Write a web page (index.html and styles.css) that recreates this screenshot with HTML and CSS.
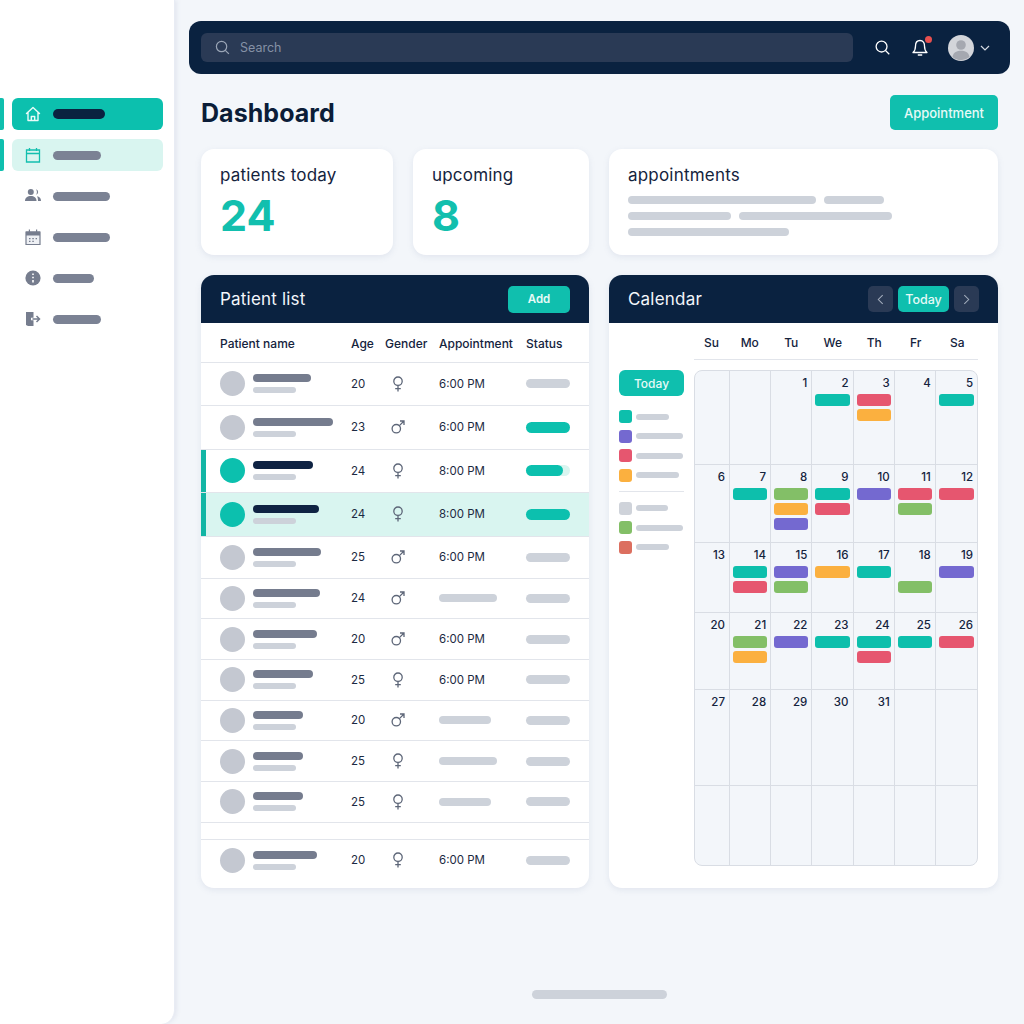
FILE: index.html
```html
<!DOCTYPE html>
<html lang="en">
<head>
    <meta charset="UTF-8">
    <meta name="viewport" content="width=device-width, initial-scale=1.0">
    <title>Dashboard</title>
    <link rel="stylesheet" href="styles.css">
</head>
<body>
    <svg class="defs" width="0" height="0">
        <symbol id="female" viewBox="0 0 14 16">
            <circle cx="7" cy="5.2" r="4.2" fill="none" stroke="currentColor" stroke-width="1.3"/>
            <path d="M7 9.4V15.4M4.2 12.6H9.8" fill="none" stroke="currentColor" stroke-width="1.3"/>
        </symbol>
        <symbol id="male" viewBox="0 0 14 14">
            <circle cx="5.3" cy="8.7" r="4.2" fill="none" stroke="currentColor" stroke-width="1.3"/>
            <path d="M8.4 5.6L13 1M9 1H13V5" fill="none" stroke="currentColor" stroke-width="1.3"/>
        </symbol>
    </svg>

    <aside class="sidebar">
        <nav class="nav">
            <div class="nav-row">
                <span class="marker"></span>
                <div class="nav-item active">
                    <svg class="nav-icon" viewBox="0 0 16 16"><path d="M1.5 7.5L8 1.5L14.5 7.5M3 6.5V14.5H13V6.5M6.3 14.5V10.5H9.7V14.5" fill="none" stroke="#e8fbf8" stroke-width="1.4" stroke-linejoin="round" stroke-linecap="round"/></svg>
                    <span class="nav-bar dark w52"></span>
                </div>
            </div>
            <div class="nav-row">
                <span class="marker"></span>
                <div class="nav-item soft">
                    <svg class="nav-icon" viewBox="0 0 16 16"><path d="M1.5 3H14.5V15H1.5ZM1.5 6.5H14.5M4.5 1V4M11.5 1V4" fill="none" stroke="#13bfae" stroke-width="1.3"/></svg>
                    <span class="nav-bar w48"></span>
                </div>
            </div>
            <div class="nav-row">
                <span class="marker off"></span>
                <div class="nav-item">
                    <svg class="nav-icon" viewBox="0 0 16 16"><circle cx="5.8" cy="4" r="3" fill="#767d8e"/><path d="M11 1.2a2.9 2.9 0 0 1 0 5.6a5 5 0 0 0 0-5.6Z" fill="#767d8e"/><path d="M0 13C0 9.5 2.5 8 5.8 8S11.5 9.5 11.5 13Z" fill="#767d8e"/><path d="M12 8.2C14.500 8.500 16 10 16 13H13C13 11 12.800 9.500 12 8.200Z" fill="#767d8e"/></svg>
                    <span class="nav-bar w57"></span>
                </div>
            </div>
            <div class="nav-row">
                <span class="marker off"></span>
                <div class="nav-item">
                    <svg class="nav-icon" viewBox="0 0 16 16"><path d="M1 3H15V15.500H1Z" fill="#eef0f4" stroke="#767d8e" stroke-width="1.200"/><path d="M1 2.500H15V6.500H1ZM3.800 0.500H5V3H3.800ZM11 0.500H12.200V3H11Z" fill="#767d8e"/><path d="M4 9H5.500V10.300H4ZM7.300 9H8.800V10.300H7.300ZM10.600 9H12V10.300H10.600ZM4 11.800H5.500V13H4ZM7.300 11.800H8.800V13H7.300Z" fill="#767d8e"/></svg>
                    <span class="nav-bar w57"></span>
                </div>
            </div>
            <div class="nav-row">
                <span class="marker off"></span>
                <div class="nav-item">
                    <svg class="nav-icon" viewBox="0 0 16 16"><circle cx="8" cy="8" r="7.600" fill="#767d8e"/><path d="M7.200 3.500H8.800V5.100H7.200ZM7.200 6.700H8.800V8.300H7.200ZM7.200 9.900H8.800V12.500H7.200Z" fill="#fff"/></svg>
                    <span class="nav-bar w41"></span>
                </div>
            </div>
            <div class="nav-row">
                <span class="marker off"></span>
                <div class="nav-item">
                    <svg class="nav-icon" viewBox="0 0 16 16"><path d="M1 1H8.500V6.800H6V9.200H8.500V15H3L1 14Z" fill="#767d8e"/><path d="M7.500 8H14.500M11.500 5L14.500 8L11.500 11" fill="none" stroke="#767d8e" stroke-width="1.500"/></svg>
                    <span class="nav-bar w48"></span>
                </div>
            </div>
        </nav>
    </aside>

    <main class="main">
        <header class="topbar">
            <div class="search">
                <svg class="search-icon" viewBox="0 0 16 16"><circle cx="7" cy="7" r="5.500" fill="none" stroke="#9aa5b6" stroke-width="1.300"/><path d="M11 11L14.800 14.800" stroke="#9aa5b6" stroke-width="1.300"/></svg>
                <span>Search</span>
            </div>
            <div class="top-actions">
                <svg class="top-icon" viewBox="0 0 16 16"><circle cx="7" cy="7" r="5.800" fill="none" stroke="#fff" stroke-width="1.400"/><path d="M11.200 11.200L15.200 15.200" stroke="#fff" stroke-width="1.400"/></svg>
                <div class="bell">
                    <svg class="top-icon" viewBox="0 0 16 18"><path d="M8 1.500C4.800 1.500 3.500 4 3.500 7C3.500 10 2.800 12 1 13.500H15C13.200 12 12.500 10 12.500 7C12.500 4 11.200 1.500 8 1.500Z" fill="none" stroke="#fff" stroke-width="1.300" stroke-linejoin="round"/><path d="M5.800 16H10.200" stroke="#fff" stroke-width="1.500"/></svg>
                    <span class="bell-dot"></span>
                </div>
                <div class="user">
                    <svg class="user-pic" viewBox="0 0 26 26"><circle cx="13" cy="13" r="13" fill="#d3d5da"/><circle cx="13" cy="10" r="4.800" fill="#a5a8b0"/><path d="M4.500 22C5.500 17 9 15.800 13 15.800S20.500 17 21.500 22A13 13 0 0 1 4.500 22Z" fill="#a5a8b0"/></svg>
                    <svg class="chevron" viewBox="0 0 10 6"><path d="M1 1L5 5L9 1" fill="none" stroke="#d5dae3" stroke-width="1.200"/></svg>
                </div>
            </div>
        </header>

        <div class="content">
            <div class="title-row">
                <h1>Dashboard</h1>
                <button class="btn-appointment">Appointment</button>
            </div>

            <section class="stats">
                <div class="card">
                    <div class="card-label">patients today</div>
                    <div class="card-number">24</div>
                </div>
                <div class="card">
                    <div class="card-label">upcoming</div>
                    <div class="card-number">8</div>
                </div>
                <div class="card">
                    <div class="card-label">appointments</div>
                    <div class="lines">
                        <div class="line-row"><span class="sk" style="width:188px"></span><span class="sk" style="width:60px"></span></div>
                        <div class="line-row"><span class="sk" style="width:103px"></span><span class="sk" style="width:153px"></span></div>
                        <div class="line-row"><span class="sk" style="width:161px"></span></div>
                    </div>
                </div>
            </section>

            <section class="panels">
                <div class="panel">
                    <div class="panel-head">
                        <h2>Patient list</h2>
                        <button class="btn-add">Add</button>
                    </div>
                    <div class="table">
                        <div class="row head-row">
                            <span class="col-name">Patient name</span>
                            <span>Age</span>
                            <span>Gender</span>
                            <span>Appointment</span>
                            <span>Status</span>
                        </div>
                        <div class="row tall">
                            <div class="patient"><span class="avatar"></span><div><span class="name" style="width:58px"></span><span class="sub"></span></div></div>
                            <span>20</span>
                            <svg class="gender female"><use href="#female"/></svg>
                            <span>6:00 PM</span>
                            <span class="status"></span>
                        </div>
                        <div class="row tall">
                            <div class="patient"><span class="avatar"></span><div><span class="name" style="width:80px"></span><span class="sub"></span></div></div>
                            <span>23</span>
                            <svg class="gender male"><use href="#male"/></svg>
                            <span>6:00 PM</span>
                            <span class="status on"></span>
                        </div>
                        <div class="row tall picked">
                            <div class="patient"><span class="avatar teal"></span><div><span class="name dark" style="width:60px"></span><span class="sub"></span></div></div>
                            <span>24</span>
                            <svg class="gender female"><use href="#female"/></svg>
                            <span>8:00 PM</span>
                            <span class="status part"><span class="status-fill"></span></span>
                        </div>
                        <div class="row tall picked tinted">
                            <div class="patient"><span class="avatar teal"></span><div><span class="name dark" style="width:66px"></span><span class="sub"></span></div></div>
                            <span>24</span>
                            <svg class="gender female"><use href="#female"/></svg>
                            <span>8:00 PM</span>
                            <span class="status on"></span>
                        </div>
                        <div class="row mid">
                            <div class="patient"><span class="avatar"></span><div><span class="name" style="width:68px"></span><span class="sub"></span></div></div>
                            <span>25</span>
                            <svg class="gender male"><use href="#male"/></svg>
                            <span>6:00 PM</span>
                            <span class="status"></span>
                        </div>
                        <div class="row">
                            <div class="patient"><span class="avatar"></span><div><span class="name" style="width:67px"></span><span class="sub"></span></div></div>
                            <span>24</span>
                            <svg class="gender male"><use href="#male"/></svg>
                            <span class="sk" style="width:58px"></span>
                            <span class="status"></span>
                        </div>
                        <div class="row">
                            <div class="patient"><span class="avatar"></span><div><span class="name" style="width:64px"></span><span class="sub"></span></div></div>
                            <span>20</span>
                            <svg class="gender male"><use href="#male"/></svg>
                            <span>6:00 PM</span>
                            <span class="status"></span>
                        </div>
                        <div class="row">
                            <div class="patient"><span class="avatar"></span><div><span class="name" style="width:60px"></span><span class="sub"></span></div></div>
                            <span>25</span>
                            <svg class="gender female"><use href="#female"/></svg>
                            <span>6:00 PM</span>
                            <span class="status"></span>
                        </div>
                        <div class="row">
                            <div class="patient"><span class="avatar"></span><div><span class="name" style="width:50px"></span><span class="sub"></span></div></div>
                            <span>20</span>
                            <svg class="gender male"><use href="#male"/></svg>
                            <span class="sk" style="width:52px"></span>
                            <span class="status"></span>
                        </div>
                        <div class="row">
                            <div class="patient"><span class="avatar"></span><div><span class="name" style="width:50px"></span><span class="sub"></span></div></div>
                            <span>25</span>
                            <svg class="gender female"><use href="#female"/></svg>
                            <span class="sk" style="width:58px"></span>
                            <span class="status"></span>
                        </div>
                        <div class="row">
                            <div class="patient"><span class="avatar"></span><div><span class="name" style="width:50px"></span><span class="sub"></span></div></div>
                            <span>25</span>
                            <svg class="gender female"><use href="#female"/></svg>
                            <span class="sk" style="width:52px"></span>
                            <span class="status"></span>
                        </div>
                        <div class="row-gap"></div>
                        <div class="row last">
                            <div class="patient"><span class="avatar"></span><div><span class="name" style="width:64px"></span><span class="sub"></span></div></div>
                            <span>20</span>
                            <svg class="gender female"><use href="#female"/></svg>
                            <span>6:00 PM</span>
                            <span class="status"></span>
                        </div>
                    </div>
                </div>

                <div class="panel">
                    <div class="panel-head">
                        <h2>Calendar</h2>
                        <div class="cal-controls">
                            <button class="btn-arrow"><svg viewBox="0 0 8 12"><path d="M6.500 1L1.500 6L6.500 11" fill="none" stroke="#a4aebd" stroke-width="1.200"/></svg></button>
                            <button class="btn-today">Today</button>
                            <button class="btn-arrow"><svg viewBox="0 0 8 12"><path d="M1.500 1L6.500 6L1.500 11" fill="none" stroke="#a4aebd" stroke-width="1.200"/></svg></button>
                        </div>
                    </div>
                    <div class="cal-body">
                        <div class="cal-side">
                            <button class="btn-side-today">Today</button>
                            <div class="legend">
                                <div class="legend-item"><span class="swatch teal"></span><span class="sk-small" style="width:33px"></span></div>
                                <div class="legend-item"><span class="swatch purple"></span><span class="sk-small" style="width:47px"></span></div>
                                <div class="legend-item"><span class="swatch red"></span><span class="sk-small" style="width:47px"></span></div>
                                <div class="legend-item"><span class="swatch orange"></span><span class="sk-small" style="width:43px"></span></div>
                            </div>
                            <div class="legend second">
                                <div class="legend-item"><span class="swatch grey"></span><span class="sk-small" style="width:32px"></span></div>
                                <div class="legend-item"><span class="swatch green"></span><span class="sk-small" style="width:47px"></span></div>
                                <div class="legend-item"><span class="swatch brick"></span><span class="sk-small" style="width:33px"></span></div>
                            </div>
                        </div>
                        <div class="cal-main">
                            <div class="weekdays">
                                <span>Su</span><span>Mo</span><span>Tu</span><span>We</span><span>Th</span><span>Fr</span><span>Sa</span>
                            </div>
                            <div class="month">
                                <div class="day"></div>
                                <div class="day"></div>
                                <div class="day"><b>1</b></div>
                                <div class="day"><b>2</b><i class="ev teal"></i></div>
                                <div class="day"><b>3</b><i class="ev red"></i><i class="ev orange"></i></div>
                                <div class="day"><b>4</b></div>
                                <div class="day"><b>5</b><i class="ev teal"></i></div>

                                <div class="day"><b>6</b></div>
                                <div class="day"><b>7</b><i class="ev teal"></i></div>
                                <div class="day"><b>8</b><i class="ev green"></i><i class="ev orange"></i><i class="ev purple"></i></div>
                                <div class="day"><b>9</b><i class="ev teal"></i><i class="ev red"></i></div>
                                <div class="day"><b>10</b><i class="ev purple"></i></div>
                                <div class="day"><b>11</b><i class="ev red"></i><i class="ev green"></i></div>
                                <div class="day"><b>12</b><i class="ev red"></i></div>

                                <div class="day"><b>13</b></div>
                                <div class="day"><b>14</b><i class="ev teal"></i><i class="ev red"></i></div>
                                <div class="day"><b>15</b><i class="ev purple"></i><i class="ev green"></i></div>
                                <div class="day"><b>16</b><i class="ev orange"></i></div>
                                <div class="day"><b>17</b><i class="ev teal"></i></div>
                                <div class="day"><b>18</b><i class="ev empty"></i><i class="ev green"></i></div>
                                <div class="day"><b>19</b><i class="ev purple"></i></div>

                                <div class="day"><b>20</b></div>
                                <div class="day"><b>21</b><i class="ev green"></i><i class="ev orange"></i></div>
                                <div class="day"><b>22</b><i class="ev purple"></i></div>
                                <div class="day"><b>23</b><i class="ev teal"></i></div>
                                <div class="day"><b>24</b><i class="ev teal"></i><i class="ev red"></i></div>
                                <div class="day"><b>25</b><i class="ev teal"></i></div>
                                <div class="day"><b>26</b><i class="ev red"></i></div>

                                <div class="day"><b>27</b></div>
                                <div class="day"><b>28</b></div>
                                <div class="day"><b>29</b></div>
                                <div class="day"><b>30</b></div>
                                <div class="day"><b>31</b></div>
                                <div class="day"></div>
                                <div class="day"></div>

                                <div class="day"></div>
                                <div class="day"></div>
                                <div class="day"></div>
                                <div class="day"></div>
                                <div class="day"></div>
                                <div class="day"></div>
                                <div class="day"></div>
                            </div>
                        </div>
                    </div>
                </div>
            </section>
        </div>

        <div class="scroll-pill"></div>
    </main>
</body>
</html>
```

FILE: styles.css
```css
* {
    box-sizing: border-box;
}
body {
    font-family: Inter, "Open Sans", sans-serif;
    margin: 0;
    display: flex;
    height: 1024px;
    overflow: hidden;
    background-color: #f3f6fa;
    color: #0b1d38;
}
button {
    font-family: inherit;
    border: none;
    padding: 0;
    color: #e6faf7;
}
.defs {
    display: none;
}

/* sidebar */
.sidebar {
    width: 175px;
    flex-shrink: 0;
    height: 1024px;
    background: white;
    border-right: 1px solid #e8ecf4;
    border-radius: 0 0 14px 0;
    box-shadow: 2px 0 4px rgba(120, 135, 170, 0.12);
    padding-top: 98px;
}
.nav {
    display: flex;
    flex-direction: column;
    gap: 9px;
}
.nav-row {
    display: flex;
    gap: 8px;
    height: 32px;
}
.marker {
    width: 4px;
    background-color: #0fbfae;
    border-radius: 0 2px 2px 0;
}
.marker.off {
    background: none;
}
.nav-item {
    width: 151px;
    display: flex;
    align-items: center;
    gap: 12px;
    padding-left: 13px;
    border-radius: 6px;
}
.nav-item.active {
    background-color: #0cc0ae;
}
.nav-item.soft {
    background-color: #d9f5f0;
}
.nav-icon {
    width: 16px;
    height: 16px;
}
.nav-bar {
    height: 9px;
    border-radius: 5px;
    background-color: #7b8294;
}
.nav-bar.dark {
    height: 10px;
    background-color: #0a2240;
}
.w41 { width: 41px; }
.w48 { width: 48px; }
.w52 { width: 52px; }
.w57 { width: 57px; }

/* main area */
.main {
    width: 849px;
    padding: 21px 14px 0 14px;
    display: flex;
    flex-direction: column;
}
.topbar {
    height: 53px;
    background-color: #0a2240;
    border-radius: 12px;
    display: flex;
    align-items: center;
    padding: 0 20px 0 12px;
}
.search {
    width: 652px;
    height: 29px;
    background-color: #2a3a55;
    border-radius: 6px;
    display: flex;
    align-items: center;
    gap: 10px;
    padding-left: 14px;
    color: #8591a5;
    font-size: 12.5px;
}
.search-icon {
    width: 15px;
    height: 15px;
}
.top-actions {
    display: flex;
    align-items: center;
    margin-left: 22px;
}
.top-icon {
    width: 15px;
    height: 15px;
    display: block;
}
.bell {
    position: relative;
    margin-left: 22px;
}
.bell .top-icon {
    width: 16px;
    height: 18px;
}
.bell-dot {
    position: absolute;
    top: -3px;
    right: -4px;
    width: 7px;
    height: 7px;
    border-radius: 50%;
    background-color: #e8504f;
}
.user {
    display: flex;
    align-items: center;
    gap: 6px;
    margin-left: 20px;
}
.user-pic {
    width: 26px;
    height: 26px;
}
.chevron {
    width: 10px;
    height: 6px;
}

.content {
    padding: 0 12px;
}
.title-row {
    display: flex;
    justify-content: space-between;
    align-items: center;
    height: 35px;
    margin-top: 21px;
}
h1 {
    margin: 0;
    font-size: 25px;
    font-weight: 700;
    letter-spacing: 0.05px;
    color: #0b1d38;
}
.btn-appointment {
    width: 108px;
    height: 35px;
    background-color: #10bfae;
    border-radius: 5px;
    font-size: 13px;
    font-weight: 500;
}

.stats {
    display: grid;
    grid-template-columns: 192px 176px 389px;
    gap: 20px;
    margin-top: 19px;
}
.card {
    height: 106px;
    background: white;
    border-radius: 13px;
    box-shadow: 0 2px 6px rgba(120, 135, 170, 0.14);
    padding: 16px 19px;
}
.card-label {
    font-size: 17px;
    line-height: 20px;
    letter-spacing: 0.2px;
    color: #14233d;
}
.card-number {
    font-size: 43px;
    line-height: 48px;
    margin-top: 6px;
    font-weight: 700;
    color: #12bfae;
}
.lines {
    margin-top: 11px;
    display: flex;
    flex-direction: column;
    gap: 8px;
}
.line-row {
    display: flex;
    gap: 8px;
}
.sk {
    display: block;
    height: 8px;
    border-radius: 4px;
    background-color: #cdd2da;
}

.panels {
    display: grid;
    grid-template-columns: 388px 389px;
    gap: 20px;
    margin-top: 20px;
}
.panel {
    height: 613px;
    background: white;
    border-radius: 13px;
    box-shadow: 0 2px 6px rgba(120, 135, 170, 0.14);
    overflow: hidden;
}
.panel-head {
    height: 48px;
    background-color: #0a2240;
    display: flex;
    justify-content: space-between;
    align-items: center;
    padding: 0 19px;
}
h2 {
    margin: 0;
    font-size: 17px;
    font-weight: 400;
    letter-spacing: 0.2px;
    color: #f3f6fb;
}
.btn-add {
    width: 62px;
    height: 27px;
    background-color: #10bfae;
    border-radius: 5px;
    font-size: 11.500px;
    font-weight: 600;
}

/* patient table */
.row {
    display: grid;
    grid-template-columns: 131px 34px 54px 87px 1fr;
    align-items: center;
    height: 40.700px;
    padding: 0 19px;
    border-bottom: 1px solid #e2e5eb;
    font-size: 11.500px;
    color: #1c2a42;
}
.head-row {
    height: 39.500px;
    padding-top: 3px;
    font-weight: 500;
    font-size: 12px;
    color: #14233d;
}
.row.tall {
    height: 43.500px;
}
.row.mid {
    height: 42px;
}
.row.last {
    height: 41px;
    border-bottom: none;
}
.row-gap {
    height: 17px;
    border-bottom: 1px solid #e2e5eb;
}
.row.picked {
    box-shadow: inset 5px 0 0 #12b5a4;
}
.row.tinted {
    background-color: #d9f5f0;
}
.patient {
    display: flex;
    align-items: center;
    gap: 8px;
}
.avatar {
    width: 25px;
    height: 25px;
    border-radius: 50%;
    background-color: #c4c8d1;
}
.avatar.teal {
    background-color: #0cc0ae;
}
.name {
    display: block;
    height: 8px;
    border-radius: 4px;
    background-color: #757c8e;
}
.name.dark {
    background-color: #0f2343;
}
.sub {
    display: block;
    width: 43px;
    height: 6px;
    margin-top: 5px;
    border-radius: 3px;
    background-color: #cdd2da;
}
.gender {
    color: #5d6678;
    width: 14px;
    height: 16px;
    margin-left: 6px;
}
.status {
    display: block;
    width: 44px;
    height: 9px;
    border-radius: 5px;
    background-color: #cdd2da;
}
.status.on {
    height: 11px;
    border-radius: 6px;
    background-color: #0cc0ae;
}
.status.part {
    height: 11px;
    border-radius: 6px;
    background-color: #d9f5f0;
}
.status-fill {
    display: block;
    width: 37px;
    height: 11px;
    border-radius: 6px;
    background-color: #0cc0ae;
}

/* calendar */
.cal-controls {
    display: flex;
    gap: 5px;
}
.btn-arrow {
    width: 25px;
    height: 26px;
    background-color: #2a3a55;
    border-radius: 5px;
    display: flex;
    align-items: center;
    justify-content: center;
}
.btn-arrow svg {
    width: 7px;
    height: 11px;
}
.btn-today {
    width: 51px;
    height: 26px;
    background-color: #0fbfae;
    border-radius: 5px;
    font-size: 12.500px;
    font-weight: 500;
}
.cal-body {
    display: flex;
    padding: 0 20px 0 10px;
}
.cal-side {
    width: 65px;
    margin-right: 10px;
    padding-top: 47px;
}
.btn-side-today {
    width: 65px;
    height: 26px;
    background-color: #0fbfae;
    border-radius: 6px;
    font-size: 12px;
    font-weight: 500;
}
.legend {
    display: flex;
    flex-direction: column;
    gap: 6.500px;
    margin-top: 14px;
    padding-bottom: 9px;
    border-bottom: 1px solid #e2e5eb;
}
.legend.second {
    border-bottom: none;
    margin-top: 10px;
}
.legend-item {
    display: flex;
    align-items: center;
    gap: 4px;
}
.swatch {
    width: 13px;
    height: 13px;
    border-radius: 3px;
}
.sk-small {
    height: 6px;
    border-radius: 3px;
    background-color: #cdd2da;
}
.teal { background-color: #0dbfac; }
.purple { background-color: #7469d0; }
.red { background-color: #e6566f; }
.orange { background-color: #fbb03f; }
.green { background-color: #83bf67; }
.grey { background-color: #cfd3da; }
.brick { background-color: #dc6f5f; }

.cal-main {
    width: 284px;
}
.weekdays {
    display: grid;
    grid-template-columns: 35px repeat(6, 1fr);
    height: 37px;
    padding-top: 2px;
    border-bottom: 1px solid #e2e5eb;
    align-items: center;
    text-align: center;
    font-size: 12px;
    font-weight: 500;
    color: #14233d;
}
.month {
    display: grid;
    grid-template-columns: 35px repeat(6, 1fr);
    grid-template-rows: 94px 78px 70px 77px 96px 79px;
    margin-top: 10px;
    background-color: #f3f6fa;
    border: 1px solid #d9dde4;
    border-radius: 8px;
    overflow: hidden;
}
.day {
    border-right: 1px solid #d9dde4;
    border-bottom: 1px solid #d9dde4;
    padding: 5px 3px 0 3px;
    display: flex;
    flex-direction: column;
    gap: 3px;
}
.day:nth-child(7n) {
    border-right: none;
}
.day:nth-last-child(-n+7) {
    border-bottom: none;
}
.day b {
    font-size: 11.500px;
    line-height: 14px;
    font-weight: 500;
    text-align: right;
    padding-right: 1px;
    margin-bottom: 1px;
    color: #14233d;
}
.ev {
    display: block;
    height: 12px;
    border-radius: 3px;
}
.ev.empty {
    background: none;
}

.scroll-pill {
    width: 135px;
    height: 9px;
    margin: 102px auto 0;
    border-radius: 5px;
    background-color: #cdd2da;
}
```
